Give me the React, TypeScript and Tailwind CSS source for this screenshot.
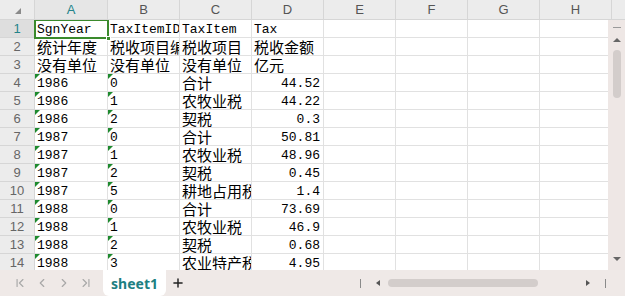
import React from 'react'
import { ChevronFirst, ChevronLeft, ChevronRight, ChevronLast, Plus } from 'lucide-react'

const columns = ['A', 'B', 'C', 'D', 'E', 'F', 'G', 'H']
const colWidths = ['w-[73px]', 'w-[72px]', 'w-[72px]', 'w-[72px]', 'w-[72px]', 'w-[72px]', 'w-[72px]', 'w-[72px]']

const rows: string[][] = [
  ['SgnYear', 'TaxItemID', 'TaxItem', 'Tax'],
  ['统计年度', '税收项目编码', '税收项目', '税收金额'],
  ['没有单位', '没有单位', '没有单位', '亿元'],
  ['1986', '0', '合计', '44.52'],
  ['1986', '1', '农牧业税', '44.22'],
  ['1986', '2', '契税', '0.3'],
  ['1987', '0', '合计', '50.81'],
  ['1987', '1', '农牧业税', '48.96'],
  ['1987', '2', '契税', '0.45'],
  ['1987', '5', '耕地占用税', '1.4'],
  ['1988', '0', '合计', '73.69'],
  ['1988', '1', '农牧业税', '46.9'],
  ['1988', '2', '契税', '0.68'],
  ['1988', '3', '农业特产税', '4.95'],
]

const isCjk = (s: string) => /[\u4e00-\u9fff]/.test(s)

function Cell({ value, col, row }: { value: string; col: number; row: number }) {
  const numeric = col === 3 && row >= 3
  const textNumber = (col === 0 || col === 1) && row >= 3
  const cjk = isCjk(value)
  return (
    <div
      className={`relative h-[18px] shrink-0 overflow-hidden whitespace-nowrap border-r border-b border-[#e1e1e1] bg-white text-black ${colWidths[col]} ${
        numeric ? 'text-right pr-[3px]' : 'pl-[2px]'
      } ${
        cjk
          ? "text-[15px] leading-[18px] [font-family:'Noto_Sans_CJK_SC',sans-serif]"
          : "text-[13px] leading-[20px] [font-family:'Liberation_Mono',monospace]"
      }`}
    >
      {textNumber && (
        <span className="absolute left-0 top-0 h-0 w-0 border-t-[5px] border-r-[5px] border-t-[#1e8a2e] border-r-transparent" />
      )}
      {value}
    </div>
  )
}

export default function App() {
  return (
    <div className="w-[625px] h-[296px] overflow-hidden bg-white flex flex-col [font-family:'Liberation_Sans',sans-serif]">
      {/* column header */}
      <div className="flex h-[20px] shrink-0 bg-[#ececec]">
        <div className="relative w-[35px] shrink-0 border-r border-b border-[#d6d6d6]">
          <span className="absolute right-[13px] bottom-[5px] h-0 w-0 border-b-[6px] border-l-[6px] border-b-[#8a8a8a] border-l-transparent" />
        </div>
        {columns.map((c, i) => (
          <div
            key={c}
            className={`${colWidths[i]} shrink-0 flex items-center justify-center border-r border-b border-[#d6d6d6] text-[13px] ${
              i === 0 ? 'text-[#23848a] bg-[#e6e6e6]' : 'text-[#555]'
            }`}
          >
            {c}
          </div>
        ))}
        <div className="flex-1 border-b border-[#d6d6d6]" />
      </div>

      {/* body */}
      <div className="flex flex-1 min-h-0">
        <div className="relative flex-1 overflow-hidden">
          {rows.map((r, ri) => (
            <div key={ri} className="flex">
              <div
                className={`w-[35px] h-[18px] shrink-0 flex items-center justify-center border-r border-b border-[#d6d6d6] text-[13px] ${
                  ri === 0 ? 'bg-[#dedede] text-[#23848a]' : 'bg-[#ececec] text-[#666]'
                }`}
              >
                {ri + 1}
              </div>
              {columns.map((c, ci) => (
                <Cell key={c} value={r[ci] ?? ''} col={ci} row={ri} />
              ))}
            </div>
          ))}
          {/* selection on A1 */}
          <div className="absolute left-[34px] top-[-1px] w-[75px] h-[20px] border-2 border-[#3a8a2c]">
            <span className="absolute right-[-4px] bottom-[-4px] w-[5px] h-[5px] bg-[#3a8a2c] border border-white" />
          </div>
        </div>

        {/* vertical scrollbar */}
        <div className="w-[17px] shrink-0 bg-[#eee7e5] flex flex-col items-center">
          <div className="mt-[7px] w-[8px] h-[1px] bg-[#9a9a9a]" />
          <div className="mt-[10px] h-0 w-0 border-b-[4px] border-x-[4px] border-b-[#666] border-x-transparent" />
          <div className="mt-[8px] w-[8px] h-[48px] rounded-full bg-[#d3cdcb]" />
          <div className="flex-1" />
          <div className="mb-[9px] h-0 w-0 border-t-[4px] border-x-[4px] border-t-[#666] border-x-transparent" />
        </div>
      </div>

      {/* bottom bar */}
      <div className="h-[26px] shrink-0 flex items-center bg-[#efe9e7]">
        <div className="flex items-center gap-[8px] pl-[13px] text-[#a8a8a8]">
          <ChevronFirst size={14} strokeWidth={2} />
          <ChevronLeft size={14} strokeWidth={2} />
          <ChevronRight size={14} strokeWidth={2} />
          <ChevronLast size={14} strokeWidth={2} />
        </div>
        <div className="ml-[10px] w-[63px] h-[26px] bg-white rounded-b-[6px] flex items-center justify-center text-[14px] font-bold text-[#1d7f82] [font-family:'Noto_Sans',sans-serif]">
          sheet1
        </div>
        <Plus size={14} strokeWidth={2.5} className="ml-[5px] text-[#222]" />
        <div className="flex-1" />
        <div className="flex items-center w-[265px]">
          <div className="w-[1px] h-[9px] bg-[#8a8a8a]" />
          <div className="ml-[15px] h-0 w-0 border-r-[4px] border-y-[3px] border-r-[#555] border-y-transparent" />
          <div className="ml-[8px] w-[150px] h-[8px] rounded-full bg-[#d3cdcb]" />
          <div className="flex-1" />
          <div className="h-0 w-0 border-l-[4px] border-y-[3px] border-l-[#555] border-y-transparent" />
          <div className="ml-[15px] mr-[19px] w-[1px] h-[9px] bg-[#8a8a8a]" />
        </div>
      </div>
    </div>
  )
}
